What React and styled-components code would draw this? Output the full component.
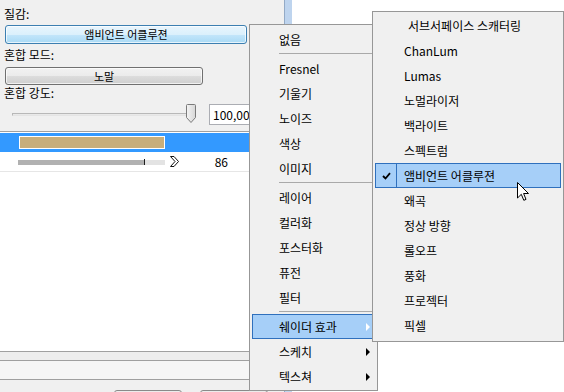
import React from "react";
import styled, { createGlobalStyle } from "styled-components";

const GlobalStyle = createGlobalStyle`
  html, body {
    margin: 0;
    padding: 0;
    background: #fff;
  }
  body {
    font-family: "Noto Sans CJK KR", "Noto Sans", sans-serif;
    font-size: 12px;
    color: #000;
  }
`;

const menuMain = [
  { label: "없음" },
  { sep: true },
  { label: "Fresnel" },
  { label: "기울기" },
  { label: "노이즈" },
  { label: "색상" },
  { label: "이미지" },
  { sep: true },
  { label: "레이어" },
  { label: "컬러화" },
  { label: "포스터화" },
  { label: "퓨전" },
  { label: "필터" },
  { sep: true },
  { label: "쉐이더 효과", sub: true, active: true },
  { label: "스케치", sub: true },
  { label: "텍스쳐", sub: true },
];

const menuShader = [
  "서브서페이스 스캐터링",
  "ChanLum",
  "Lumas",
  "노멀라이저",
  "백라이트",
  "스펙트럼",
  "앰비언트 어클루젼",
  "왜곡",
  "정상 방향",
  "롤오프",
  "풍화",
  "프로젝터",
  "픽셀",
];

const App = () => {
  return (
    <>
      <GlobalStyle />
      <S.Screen>
        <S.Panel>
          <S.Controls>
            <S.Label $top={6}>질감:</S.Label>
            <S.Button $focused $width={242} $height={19}>
              앰비언트 어클루젼
            </S.Button>
            <S.Label $top={3}>혼합 모드:</S.Label>
            <S.Button $width={198} $height={18} $top={4}>
              노말
            </S.Button>
            <S.Label $top={0}>혼합 강도:</S.Label>
            <S.SliderRow>
              <S.Groove />
              <S.Thumb viewBox="0 0 10 19" width="10" height="19">
                <defs>
                  <linearGradient id="thumbFill" x1="0" y1="0" x2="1" y2="0">
                    <stop offset="0" stopColor="#f4f4f4" />
                    <stop offset="1" stopColor="#d6d6d6" />
                  </linearGradient>
                </defs>
                <path
                  d="M1.5 0.5 H8.5 Q9.5 0.5 9.5 1.5 V13.5 L5 18.5 L0.5 13.5 V1.5 Q0.5 0.5 1.5 0.5 Z"
                  fill="url(#thumbFill)"
                  stroke="#7a7a7a"
                />
              </S.Thumb>
              <S.NumberBox>100,00</S.NumberBox>
            </S.SliderRow>
          </S.Controls>

          <S.List>
            <S.ListRow $selected>
              <S.Swatch />
            </S.ListRow>
            <S.ListRow $divider>
              <S.Bar>
                <S.BarFill />
                <S.BarTick />
                <S.BarRest />
              </S.Bar>
              <S.Chevron viewBox="0 0 9 11" width="9" height="11">
                <path
                  d="M0.5 0.5 H4 L8.5 5.5 L4 10.5 H0.5 L5 5.5 Z"
                  fill="#fff"
                  stroke="#111"
                />
              </S.Chevron>
              <S.Value>86</S.Value>
            </S.ListRow>
          </S.List>

          <S.Footer>
            <S.Band $height={8} $color="#ededed" />
            <S.Band $height={18} $color="#f6f6f6" />
            <S.FootBar>
              <S.FootButton />
              <S.FootButton />
            </S.FootBar>
          </S.Footer>
        </S.Panel>

        <S.ScrollThumb />
        <S.Canvas />

        <S.Menu $left={249} $top={24} $width={129} $height={367} $pad="2px 2px 0">
          {menuMain.map((item, i) =>
            item.sep ? (
              <S.Separator key={`sep-${i}`} />
            ) : (
              <S.MenuItem key={item.label} $active={item.active} $indent={26}>
                {item.label}
                {item.sub && <S.SubArrow $light={item.active} />}
              </S.MenuItem>
            )
          )}
        </S.Menu>

        <S.Menu $left={372} $top={11} $width={192} $height={331} $pad="1px 2px 2px">
          {menuShader.map((label, i) => {
            const checked = label === "앰비언트 어클루젼";
            return (
              <S.MenuItem key={label} $active={checked} $indent={0}>
                <S.CheckCell $active={checked}>
                  {checked && (
                    <svg viewBox="0 0 9 8" width="9" height="8">
                      <path d="M1 4 L3.5 6.5 L8 1.2" fill="none" stroke="#000" strokeWidth="1.8" />
                    </svg>
                  )}
                </S.CheckCell>
                <S.ItemText $shift={i === 0 ? 4 : 0}>{label}</S.ItemText>
              </S.MenuItem>
            );
          })}
        </S.Menu>

        <S.Cursor viewBox="0 0 12 20" width="12" height="20">
          <path
            d="M0.5 0.5 V16 L4.3 12.3 L6.8 18.3 L9 17.4 L6.6 11.5 H11.5 Z"
            fill="#fff"
            stroke="#000"
            strokeLinejoin="miter"
          />
        </S.Cursor>
      </S.Screen>
    </>
  );
};
export default App;

const S = {
  Screen: styled.div`
    position: relative;
    display: flex;
    width: 564px;
    height: 392px;
    overflow: hidden;
    background: #fff;
  `,

  Panel: styled.div`
    display: flex;
    flex-direction: column;
    flex: none;
    width: 284px;
    height: 392px;
    background: #f0f0f0;
  `,

  Controls: styled.div`
    display: flex;
    flex-direction: column;
    height: 131px;
  `,

  Label: styled.div`
    height: 16px;
    margin: ${(p) => p.$top}px 0 0 4px;
    line-height: 16px;
    font-size: 12px;
  `,

  Button: styled.div`
    box-sizing: border-box;
    width: ${(p) => p.$width}px;
    height: ${(p) => p.$height}px;
    margin: ${(p) => p.$top || 3}px 0 0 5px;
    border: 1px solid ${(p) => (p.$focused ? "#3c7fb1" : "#707070")};
    border-radius: 3px;
    background: ${(p) =>
      p.$focused
        ? "linear-gradient(#e8f5fd, #dbf0fc 50%, #c4e6fb 50%, #a9daf5)"
        : "linear-gradient(#f2f2f2, #ebebeb 50%, #dddddd 50%, #cfcfcf)"};
    box-shadow: inset 0 0 0 1px rgba(255, 255, 255, 0.7);
    font-size: 11px;
    line-height: ${(p) => p.$height - 2}px;
    text-align: center;
  `,

  SliderRow: styled.div`
    display: flex;
    align-items: center;
    height: 21px;
    margin-top: 3px;
    padding-left: 12px;
  `,

  Groove: styled.div`
    box-sizing: border-box;
    width: 178px;
    height: 3px;
    margin-top: -1px;
    border: 1px solid #b8b8b8;
    border-bottom-color: #e4e4e4;
    background: #e9e9e9;
  `,

  Thumb: styled.svg`
    display: block;
    flex: none;
    margin-left: -4px;
    margin-top: -2px;
  `,

  NumberBox: styled.div`
    box-sizing: border-box;
    flex: none;
    width: 60px;
    height: 21px;
    margin-left: 13px;
    padding-left: 3px;
    border: 1px solid #abadb3;
    background: #fff;
    font-size: 12px;
    line-height: 19px;
  `,

  List: styled.div`
    display: flex;
    flex-direction: column;
    flex: 1;
    padding-top: 1px;
    border-top: 1px solid #a0a0a0;
    background: #fff;
  `,

  ListRow: styled.div`
    display: flex;
    align-items: center;
    height: 19px;
    padding-left: ${(p) => (p.$selected ? 19 : 18)}px;
    background: ${(p) => (p.$selected ? "#3399ff" : "#fff")};
    border-bottom: ${(p) => (p.$divider ? "1px solid #e6e6e6" : "none")};
  `,

  Swatch: styled.div`
    box-sizing: border-box;
    width: 146px;
    height: 13px;
    border: 1px solid #fff;
    background: #c8ae7b;
  `,

  Bar: styled.div`
    display: flex;
    align-items: center;
    width: 147px;
    height: 7px;
    margin-top: 1px;
  `,

  BarFill: styled.div`
    width: 126px;
    height: 5px;
    background: #b1b1b1;
  `,

  BarTick: styled.div`
    width: 1px;
    height: 6px;
    background: #1e1e1e;
  `,

  BarRest: styled.div`
    flex: 1;
    height: 5px;
    background: #e3e3e3;
  `,

  Chevron: styled.svg`
    display: block;
    flex: none;
    margin-left: 5px;
  `,

  Value: styled.div`
    width: 49px;
    text-align: right;
    font-size: 12px;
    line-height: 19px;
  `,

  Footer: styled.div`
    display: flex;
    flex-direction: column;
    border-top: 1px solid #a0a0a0;
  `,

  Band: styled.div`
    height: ${(p) => p.$height}px;
    border-bottom: 1px solid #a0a0a0;
    background: ${(p) => p.$color};
  `,

  FootBar: styled.div`
    display: flex;
    gap: 18px;
    height: 12px;
    padding: 10px 0 0 114px;
    overflow: hidden;
    box-sizing: border-box;
  `,

  FootButton: styled.div`
    flex: none;
    box-sizing: border-box;
    width: 68px;
    height: 22px;
    border: 1px solid #8a8a8a;
    border-radius: 3px;
    background: #ececec;
  `,

  ScrollThumb: styled.div`
    flex: none;
    box-sizing: border-box;
    width: 8px;
    border-left: 1px solid #93aac6;
    background: #bed4ee;
  `,

  Canvas: styled.div`
    flex: 1;
    background: #fff;
  `,

  Menu: styled.div`
    position: absolute;
    left: ${(p) => p.$left}px;
    top: ${(p) => p.$top}px;
    box-sizing: border-box;
    width: ${(p) => p.$width}px;
    height: ${(p) => p.$height}px;
    padding: ${(p) => p.$pad};
    border: 1px solid #979797;
    background: #f0f0f0;
    display: flex;
    flex-direction: column;
  `,

  MenuItem: styled.div`
    display: flex;
    align-items: center;
    flex: none;
    box-sizing: border-box;
    height: 25px;
    padding-left: ${(p) => p.$indent}px;
    border: 1px solid ${(p) => (p.$active ? "#2f70bd" : "transparent")};
    background: ${(p) => (p.$active ? "#a6cff8" : "transparent")};
    font-size: 12px;
    line-height: 23px;
    white-space: nowrap;
  `,

  SubArrow: styled.span`
    width: 0;
    height: 0;
    margin-left: auto;
    margin-right: 4px;
    border-top: 4px solid transparent;
    border-bottom: 4px solid transparent;
    border-left: 4px solid ${(p) => (p.$light ? "#fff" : "#000")};
  `,

  Separator: styled.div`
    flex: none;
    box-sizing: border-box;
    height: 4px;
    margin-left: 27px;
    padding-top: 1px;

    &::before {
      content: "";
      display: block;
      height: 1px;
      background: #a9a9a9;
    }
  `,

  CheckCell: styled.div`
    display: flex;
    align-items: center;
    justify-content: center;
    flex: none;
    width: 20px;
    height: 23px;
    border-right: 1px solid ${(p) => (p.$active ? "#2f70bd" : "transparent")};
  `,

  ItemText: styled.span`
    margin-left: ${(p) => 7 + p.$shift}px;
  `,

  Cursor: styled.svg`
    position: absolute;
    left: 517px;
    top: 182px;
    display: block;
  `,
};
